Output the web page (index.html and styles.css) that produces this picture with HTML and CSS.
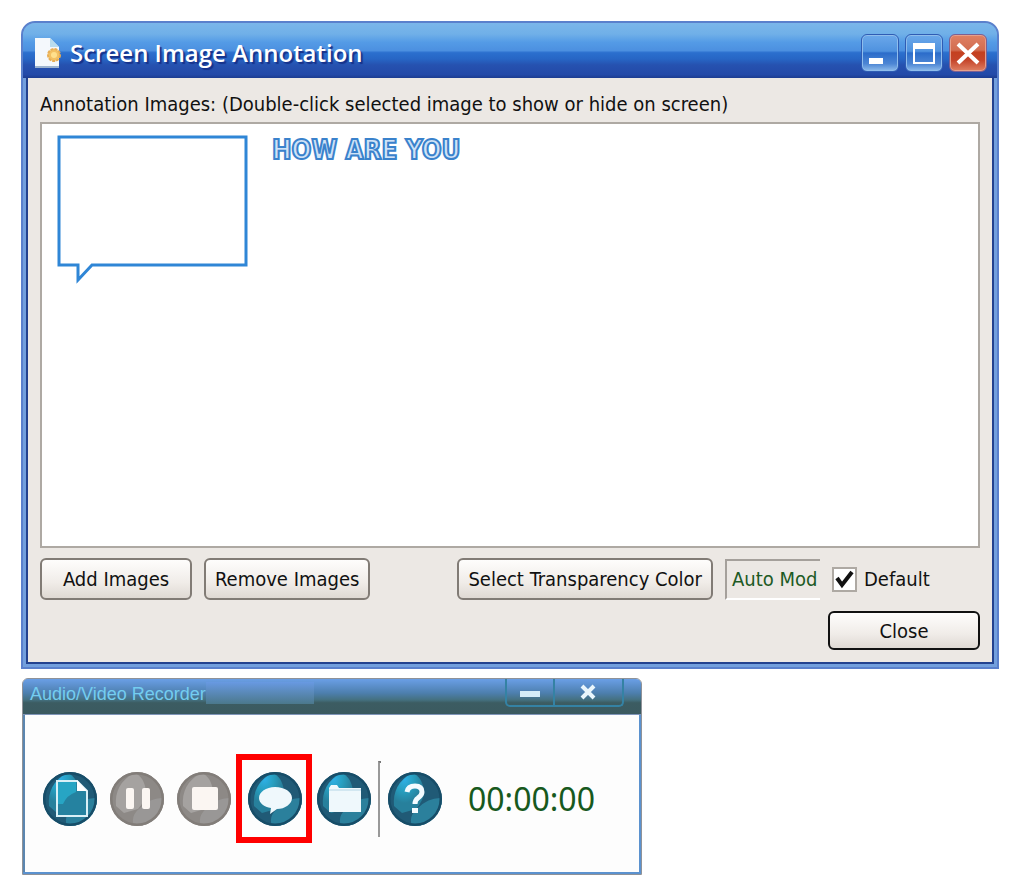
FILE: index.html
```
<!doctype html>
<html lang="en">
<head>
    <meta charset="UTF-8">
    <title>Screen Image Annotation</title>
    <meta name="viewport" content="width=device-width,initial-scale=1.0"/>
    <link rel="stylesheet" href="styles.css">
</head>
<body>
<div class="window">
    <div class="titleBar">
        <svg class="appIcon" width="28" height="32" viewBox="0 0 28 32">
            <path d="M1 1h15l9 9v20H1z" fill="#f4f8fc"/>
            <path d="M16 1l9 9h-9z" fill="#b9dcee"/>
            <path d="M1 30h24" stroke="#9db4cf" stroke-width="2"/>
            <circle cx="20" cy="18" r="6" fill="#f3c163" stroke="#e8ae55" stroke-width="2" stroke-dasharray="3 1"/>
            <circle cx="20" cy="18" r="3" fill="#ffe08c"/>
        </svg>
        <h1>Screen Image Annotation</h1>
        <div class="winBtns">
            <button type="button" aria-label="Minimize">
                <svg width="36" height="36" viewBox="0 0 36 36"><path d="M7 23h14v6H7z" fill="#fff"/></svg>
            </button>
            <button type="button" aria-label="Maximize">
                <svg width="36" height="36" viewBox="0 0 36 36"><path d="M7 8h22v21H7zM9 14v13h18V14z" fill="#fff" fill-rule="evenodd"/></svg>
            </button>
            <button type="button" class="red" aria-label="Close window">
                <svg width="36" height="36" viewBox="0 0 36 36"><path d="M8 9l20 19M28 9L8 28" stroke="#fff" stroke-width="4"/></svg>
            </button>
        </div>
    </div>
    <div class="winBody">
        <p class="caption">Annotation Images: (Double-click selected image to show or hide on screen)</p>
        <div class="imageList">
            <svg class="callout" width="192" height="150" viewBox="0 0 192 150">
                <path d="M3 2h187v128H36L22 145V130H3z" fill="#fff" stroke="#2f86d6" stroke-width="3"/>
            </svg>
            <span class="wordArt">HOW ARE YOU</span>
        </div>
        <div class="row">
            <button type="button" class="btn wide">Add Images</button>
            <button type="button" class="btn">Remove Images</button>
            <button type="button" class="btn push">Select Transparency Color</button>
            <span class="mode">Auto Mod</span>
            <label class="check"><input type="checkbox" checked>Default</label>
        </div>
        <div class="row last">
            <button type="button" class="btn wide primary push">Close</button>
        </div>
    </div>
</div>

<div class="recorder">
    <div class="recBar">
        <h2>Audio/Video Recorder</h2>
        <span class="sheen"></span>
        <div class="recBtns">
            <button type="button" aria-label="Minimize">
                <svg width="22" height="16" viewBox="0 0 22 16"><path d="M1 7h20v6H1z" fill="#d5ecf8"/></svg>
            </button>
            <button type="button" class="recClose" aria-label="Close recorder">
                <svg width="16" height="16" viewBox="0 0 16 16"><path d="M2 2l12 12M14 2L2 14" stroke="#eaf6fc" stroke-width="4"/></svg>
            </button>
        </div>
    </div>
    <div class="tools">
        <svg width="0" height="0" class="defs">
            <defs>
                <clipPath id="disc"><circle cx="27" cy="27" r="27"/></clipPath>
                <radialGradient id="glow" cx="0.35" cy="0.15" r="0.6">
                    <stop offset="0" stop-color="#2fb0e6"/>
                    <stop offset="0.5" stop-color="#279fc0"/>
                    <stop offset="1" stop-color="#27809c"/>
                </radialGradient>
                <g id="ball" clip-path="url(#disc)">
                    <path d="M0 0h54v54H0z" fill="#205a76"/>
                    <path d="M6 34Q4 12 24 1q10 3 12 18 0 9-8 18l-14 4z" fill="url(#glow)"/>
                    <path d="M24 54q-4-10 6-18 10-10 22-10l4 6v22z" fill="#2b809c"/>
                    <circle cx="27" cy="27" r="26" fill="none" stroke="#174d68" stroke-width="3"/>
                </g>
                <g id="ballOff" clip-path="url(#disc)">
                    <path d="M0 0h54v54H0z" fill="#8d8986"/>
                    <path d="M6 34Q4 12 24 1q10 3 12 18 0 9-8 18l-14 4z" fill="#a5a2a0"/>
                    <path d="M24 54q-4-10 6-18 10-10 22-10l4 6v22z" fill="#999796"/>
                    <circle cx="27" cy="27" r="26" fill="none" stroke="#827d79" stroke-width="3"/>
                </g>
            </defs>
        </svg>
        <button type="button" aria-label="New">
            <svg width="54" height="54" viewBox="0 0 54 54">
                <use href="#ball"/>
                <path d="M14 9h20l10 10v25H14z" fill="#2582a0" stroke="#d9f0f7" stroke-width="2"/>
                <path d="M15 10h18v10q-9 3-13 12h-5z" fill="#27a5c4"/>
                <path d="M34 8v11h10z" fill="#fff"/>
            </svg>
        </button>
        <button type="button" aria-label="Pause" disabled>
            <svg width="54" height="54" viewBox="0 0 54 54">
                <use href="#ballOff"/>
                <rect x="16" y="16" width="8" height="21" rx="2" fill="#fbf6f2"/>
                <rect x="32" y="16" width="8" height="21" rx="2" fill="#fbf6f2"/>
            </svg>
        </button>
        <button type="button" aria-label="Stop" disabled>
            <svg width="54" height="54" viewBox="0 0 54 54">
                <use href="#ballOff"/>
                <rect x="15" y="15" width="26" height="23" rx="2" fill="#fbf6f2"/>
            </svg>
        </button>
        <button type="button" class="marked" aria-label="Annotation">
            <svg width="54" height="54" viewBox="0 0 54 54">
                <use href="#ball"/>
                <path d="M27 15c10 0 17 5 17 11s-7 11-15 11l-7 5 1-6c-7-1-12-5-12-10 0-6 7-11 16-11z" fill="#eff8fc"/>
            </svg>
        </button>
        <button type="button" aria-label="Open folder">
            <svg width="54" height="54" viewBox="0 0 54 54">
                <use href="#ball"/>
                <path d="M12 16l2-3h6l2 3h22v24H12z" fill="#eff8fc"/>
                <path d="M12 18h32" stroke="#b5d6e6"/>
            </svg>
        </button>
        <span class="divider"></span>
        <button type="button" aria-label="Help">
            <svg width="54" height="54" viewBox="0 0 54 54">
                <use href="#ball"/>
                <path d="M19 20q1-6 8-6t7 6q0 3-4 6-3 2-3 6" fill="none" stroke="#f4fbff" stroke-width="5"/>
                <path d="M24 36h6v5h-6z" fill="#f4fbff"/>
            </svg>
        </button>
        <span class="time">00:00:00</span>
    </div>
</div>
</body>
</html>
```

FILE: styles.css
```
* {
    box-sizing: border-box;
    margin: 0;
    padding: 0;
}

body {
    padding: 21px 21px 12px;
    background: #fff;
    color: #111;
    font-family: "DejaVu Sans Condensed", "Noto Sans", sans-serif;
    font-size: 20px;
}

button, input {
    font: inherit;
    color: inherit;
}

.window {
    border: 2px solid #5a80cc;
    border-radius: 14px 14px 0 0;
    background: #729fdd;
    padding: 0 3px 3px;
}

.titleBar {
    display: flex;
    align-items: center;
    height: 55px;
    margin: 0 -3px;
    padding: 4px 10px 0 11px;
    border-radius: 12px 12px 0 0;
    background: linear-gradient(#7ab6ea 0, #70b0e8 20%, #549be6 35%, #4c90e0 50%, #2b6fce 54%, #2765c4 66%, #2652b0 76%, #2349a8 94%, #1c3c90 100%);
}

.appIcon {
    margin-right: 8px;
}

h1 {
    color: #fff;
    font-family: "Open Sans", sans-serif;
    font-size: 24px;
    font-weight: 600;
    line-height: 32px;
    text-shadow: 2px 2px 1px #16318a;
}

.winBtns {
    display: flex;
    gap: 6px;
    margin-left: auto;
}

.winBtns button {
    width: 38px;
    height: 38px;
    border: 1px solid #2f5cb4;
    border-radius: 6px;
    background: linear-gradient(#6ba8ea, #4f92df 45%, #2b6cca 50%, #4d86d4 80%, #8fbdec);
    box-shadow: inset 0 0 0 1px #8fbdec;
}

.winBtns .red {
    border-color: #7c5f92;
    background: linear-gradient(#df8064, #d26d50 42%, #c4401f 48%, #c5452a 70%, #df8064);
    box-shadow: inset 0 0 0 1px #e5a08c;
}

.winBtns svg {
    display: block;
}

.winBody {
    border: 2px solid #23428f;
    border-top: 0;
    background: #ece8e4;
    padding: 8px 12px 12px;
}

.caption {
    line-height: 36px;
    white-space: nowrap;
}

.imageList {
    display: flex;
    align-items: flex-start;
    gap: 24px;
    height: 426px;
    padding: 11px 14px;
    border: 2px solid #aea9a3;
    background: #fff;
}

.wordArt {
    color: #cfe3f7;
    font-family: "DejaVu Sans Condensed", sans-serif;
    font-size: 26px;
    font-weight: bold;
    line-height: 30px;
    -webkit-text-stroke: 2px #3a82cc;
}

.row {
    display: flex;
    align-items: center;
    gap: 12px;
    margin-top: 10px;
}

.row.last {
    margin-top: 11px;
}

.btn {
    height: 42px;
    padding: 0 9px;
    border: 2px solid #817b75;
    border-radius: 6px;
    background: linear-gradient(#fefdfc, #f0ece8 60%, #dfd9d3);
    white-space: nowrap;
}

.wide {
    width: 152px;
}

.push {
    margin-left: auto;
}

.primary {
    height: 39px;
    border-color: #111;
}

.mode {
    width: 95px;
    height: 41px;
    padding-left: 5px;
    border: 2px solid #a5a09b;
    border-right: 0;
    border-bottom-color: #fff;
    color: #1d5a24;
    line-height: 37px;
    white-space: nowrap;
}

.check {
    display: flex;
    align-items: center;
    gap: 7px;
    width: 148px;
}

.check input {
    appearance: none;
    width: 25px;
    height: 25px;
    border: 2px solid #aea9a3;
    background: #fff;
}

.check input:checked {
    background: #fff url("data:image/svg+xml,%3Csvg xmlns='http://www.w3.org/2000/svg' viewBox='0 0 21 21'%3E%3Cpath d='M3 9l5 7L18 3' fill='none' stroke='%23111' stroke-width='4'/%3E%3C/svg%3E") center no-repeat;
}

.recorder {
    width: fit-content;
    margin: 9px 0 0 1px;
    border: 1px solid #8f9298;
    border-radius: 6px 6px 0 0;
    background: #fdfdfd;
    box-shadow: inset -2px -2px #5b92cf, inset 2px 0 #5b86b0;
}

.recBar {
    display: flex;
    align-items: flex-start;
    height: 36px;
    padding: 0 17px 0 7px;
    border-bottom: 1px solid #7f95b8;
    border-radius: 5px 5px 0 0;
    background: linear-gradient(#6a9fe6, #4d7fae 40%, #44707f 60%, #3c5c62 68%, #3b5a60);
}

h2 {
    color: #74cdf0;
    font-family: "Liberation Sans", sans-serif;
    font-size: 18px;
    font-weight: normal;
    line-height: 30px;
}

.sheen {
    width: 108px;
    height: 22px;
    margin-top: 3px;
    background: linear-gradient(#6899e2, #4b788c);
}

.recBtns {
    display: flex;
    margin-left: auto;
    border: 2px solid #3482a4;
    border-top: 0;
    border-radius: 0 0 5px 5px;
}

.recBtns button {
    display: flex;
    align-items: center;
    justify-content: center;
    width: 46px;
    height: 26px;
    border: 0;
    background: none;
}

.recBtns .recClose {
    width: 69px;
    border-left: 2px solid #3482a4;
}

.tools {
    display: flex;
    align-items: center;
    gap: 13px;
    padding: 39px 46px 31px 20px;
}

.defs {
    position: absolute;
}

.tools button {
    width: 54px;
    height: 54px;
    border: 0;
    background: none;
}

.tools svg {
    display: block;
}

.tools .marked {
    width: 76px;
    height: 89px;
    margin: 0 -8px;
    padding-left: 6px;
    border: 6px solid #f00;
}

.divider {
    width: 3px;
    height: 76px;
    margin: 0 -6px;
    border-top: 2px solid #777;
    border-left: 2px solid #999;
}

.time {
    margin-left: 13px;
    color: #17591d;
    font-family: "Noto Sans", sans-serif;
    font-size: 32px;
    line-height: 44px;
}
```
